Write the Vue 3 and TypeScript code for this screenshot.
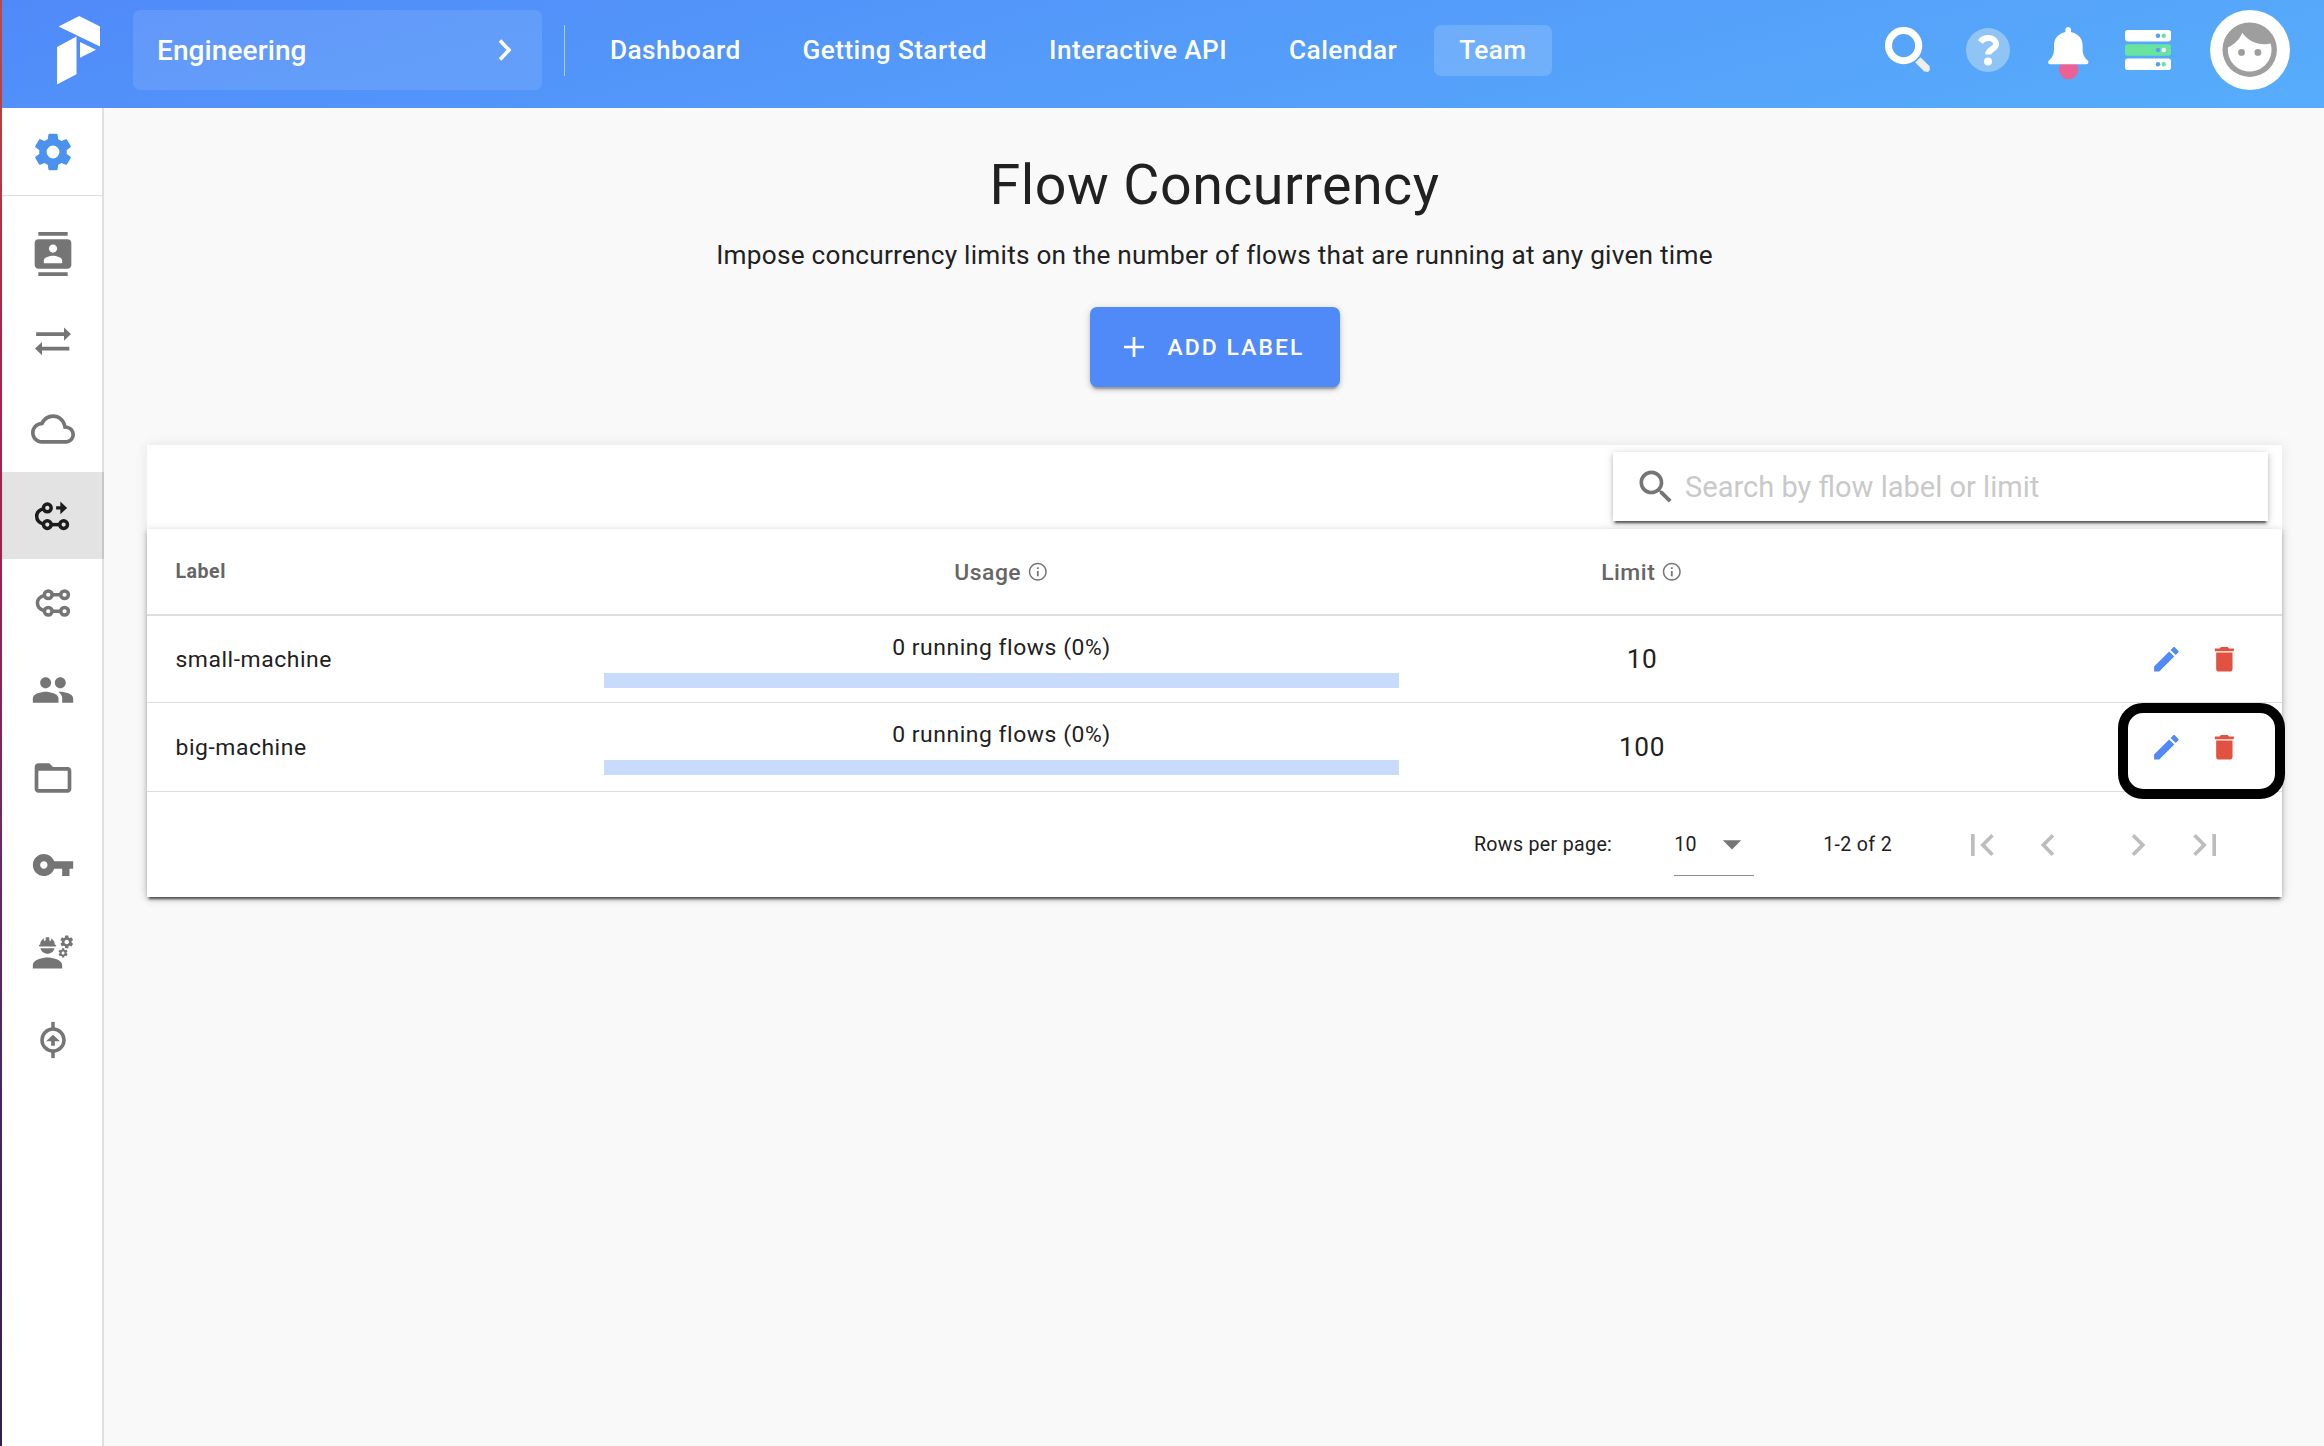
<script setup lang="ts">
interface NavLink { label: string; active?: boolean }
interface FlowLimit { label: string; running: number; limit: number; highlighted?: boolean }
interface SideItem { name: string; paths?: string[]; strokes?: string[]; rings?: [number, number][]; active?: boolean }

const links: NavLink[] = [
  { label: 'Dashboard' },
  { label: 'Getting Started' },
  { label: 'Interactive API' },
  { label: 'Calendar' },
  { label: 'Team', active: true }
]

const limits: FlowLimit[] = [
  { label: 'small-machine', running: 0, limit: 10 },
  { label: 'big-machine', running: 0, limit: 100, highlighted: true }
]

const percent = (row: FlowLimit) => Math.round((row.running / row.limit) * 100)

const cog = 'M12,15.5A3.5,3.5 0 0,1 8.5,12A3.5,3.5 0 0,1 12,8.5A3.5,3.5 0 0,1 15.5,12A3.5,3.5 0 0,1 12,15.5M19.43,12.97C19.47,12.65 19.5,12.33 19.5,12C19.5,11.67 19.47,11.34 19.43,11L21.54,9.37C21.73,9.22 21.78,8.95 21.66,8.73L19.66,5.27C19.54,5.05 19.27,4.96 19.05,5.05L16.56,6.05C16.04,5.66 15.5,5.32 14.87,5.07L14.5,2.42C14.46,2.18 14.25,2 14,2H10C9.75,2 9.54,2.18 9.5,2.42L9.13,5.07C8.5,5.32 7.96,5.66 7.44,6.05L4.95,5.05C4.73,4.96 4.46,5.05 4.34,5.27L2.34,8.73C2.21,8.95 2.27,9.22 2.46,9.37L4.57,11C4.53,11.34 4.5,11.67 4.5,12C4.5,12.33 4.53,12.65 4.57,12.97L2.46,14.63C2.27,14.78 2.21,15.05 2.34,15.27L4.34,18.73C4.46,18.95 4.73,19.03 4.95,18.95L7.44,17.94C7.96,18.34 8.5,18.68 9.13,18.93L9.5,21.58C9.54,21.82 9.75,22 10,22H14C14.25,22 14.46,21.82 14.5,21.58L14.87,18.93C15.5,18.67 16.04,18.34 16.56,17.94L19.05,18.95C19.27,19.03 19.54,18.95 19.66,18.73L21.66,15.27C21.78,15.05 21.73,14.78 21.54,14.63L19.43,12.97Z'

const sideItems: SideItem[] = [
  { name: 'account', paths: ['M20 0H4v2h16V0zM4 24h16v-2H4v2zM20 4H4c-1.1 0-2 .9-2 2v12c0 1.1.9 2 2 2h16c1.1 0 2-.9 2-2V6c0-1.1-.9-2-2-2zm-8 2.75c1.24 0 2.25 1.01 2.25 2.25s-1.01 2.25-2.25 2.25S9.75 10.24 9.75 9 10.76 6.75 12 6.75zM17 17H7v-1.5c0-1.67 3.33-2.5 5-2.5s5 .83 5 2.5V17z'] },
  { name: 'switch', paths: ['M2.8 7.2H18V4.6L21.8 8.2L18 11.8V9.3H2.8z', 'M20.9 15.1H6V12.5L2.2 16.1L6 19.8V17.2H20.9z'] },
  { name: 'cloud', paths: ['M19.35 10.04C18.67 6.59 15.64 4 12 4 9.11 4 6.6 5.64 5.35 8.04 2.34 8.36 0 10.91 0 14c0 3.31 2.69 6 6 6h13c2.76 0 5-2.24 5-5 0-2.64-2.05-4.78-4.65-4.96zM19 18H6c-2.21 0-4-1.79-4-4 0-2.05 1.53-3.76 3.56-3.97l1.07-.11.5-.95C8.08 7.14 9.94 6 12 6c2.62 0 4.88 1.86 5.39 4.43l.3 1.5 1.53.11c1.56.1 2.78 1.41 2.78 2.96 0 1.65-1.35 3-3 3z'] },
  { name: 'flow-concurrency', active: true, rings: [[8.9, 7.6], [8.9, 16.7], [17.8, 16.7]], strokes: ['M7 8C4.6 8.6 3.1 10.3 3.1 12.2S4.6 15.9 7 16.6', 'M11 16.7H15.8'], paths: ['M13.7 6.7H16V4.1L19.7 7.6L16 11.1V8.5H13.7z'] },
  { name: 'task-concurrency', rings: [[9.4, 7.5], [18.3, 7.5], [9.4, 16.5], [18.3, 16.5]], strokes: ['M7.4 7.9C5 8.4 3.5 10.1 3.5 12S5 15.6 7.4 16.2', 'M11.4 7.5H16.3', 'M11.4 16.5H16.3'] },
  { name: 'members', paths: ['M16 11c1.66 0 2.99-1.34 2.99-3S17.66 5 16 5c-1.66 0-3 1.34-3 3s1.34 3 3 3zm-8 0c1.66 0 2.99-1.34 2.99-3S9.66 5 8 5C6.34 5 5 6.34 5 8s1.34 3 3 3zm0 2c-2.33 0-7 1.17-7 3.5V19h14v-2.5c0-2.33-4.67-3.5-7-3.5zm8 0c-.29 0-.62.02-.97.05 1.16.84 1.97 1.97 1.97 3.45V19h6v-2.5c0-2.33-4.67-3.5-7-3.5z'] },
  { name: 'projects', paths: ['M20 6h-8l-2-2H4c-1.1 0-1.99.9-1.99 2L2 18c0 1.1.9 2 2 2h16c1.1 0 2-.9 2-2V8c0-1.1-.9-2-2-2zm0 12H4V8h16v10z'] },
  { name: 'secrets', paths: ['M12.65 10C11.83 7.67 9.61 6 7 6c-3.31 0-6 2.69-6 6s2.69 6 6 6c2.61 0 4.83-1.67 5.65-4H17v4h4v-4h2v-4H12.65zM7 14c-1.1 0-2-.9-2-2s.9-2 2-2 2 .9 2 2-.9 2-2 2z'] },
  { name: 'service-accounts', paths: ['M9 15c-2.67 0-8 1.34-8 4v2h16v-2c0-2.66-5.33-4-8-4zm13.1-8.16c.01-.11.02-.22.02-.34 0-.12-.01-.23-.03-.34l.74-.58c.07-.05.08-.15.04-.22l-.7-1.21c-.04-.08-.14-.1-.21-.08l-.86.35c-.18-.14-.38-.25-.59-.34l-.13-.93c-.02-.09-.09-.15-.18-.15h-1.4c-.09 0-.16.06-.17.15l-.13.93c-.21.09-.41.21-.59.34l-.87-.35c-.08-.03-.17 0-.21.08l-.7 1.21c-.04.08-.03.17.04.22l.74.58c-.02.11-.03.23-.03.34 0 .11.01.23.03.34l-.74.58c-.07.05-.08.15-.04.22l.7 1.21c.04.08.14.1.21.08l.87-.35c.18.14.38.25.59.34l.13.93c.01.09.08.15.17.15h1.4c.09 0 .16-.06.17-.15l.13-.93c.21-.09.41-.21.59-.34l.87.35c.08.03.17 0 .21-.08l.7-1.21c.04-.08.03-.17-.04-.22l-.73-.58zm-2.6.91c-.69 0-1.25-.56-1.25-1.25s.56-1.25 1.25-1.25 1.25.56 1.25 1.25-.56 1.25-1.25 1.25zm.42 3.93l-.5-.87c-.03-.06-.1-.08-.15-.06l-.62.25c-.13-.1-.27-.18-.42-.24l-.09-.66c-.02-.06-.08-.1-.14-.1h-1c-.06 0-.11.04-.12.11l-.09.66c-.15.06-.29.15-.42.24l-.62-.25c-.06-.02-.12 0-.15.06l-.5.87c-.03.06-.02.12.03.16l.53.41c-.01.08-.02.16-.02.24 0 .08.01.17.02.24l-.53.41c-.05.04-.06.11-.03.16l.5.87c.03.06.1.08.15.06l.62-.25c.13.1.27.18.42.24l.09.66c.01.07.06.11.12.11h1c.06 0 .12-.04.12-.11l.09-.66c.15-.06.29-.15.42-.24l.62.25c.06.02.12 0 .15-.06l.5-.87c.03-.06.02-.12-.03-.16l-.52-.41c.01-.08.02-.16.02-.24 0-.08-.01-.17-.02-.24l.53-.41c.05-.04.06-.11.04-.17zm-2.42 1.65c-.46 0-.83-.38-.83-.83 0-.46.38-.83.83-.83s.83.38.83.83c0 .46-.37.83-.83.83zM4.74 9h8.53c.27 0 .49-.22.49-.49v-.02c0-.27-.22-.49-.49-.49H13c0-1.48-.81-2.75-2-3.45V5.5c0 .28-.22.5-.5.5S10 5.78 10 5.5V4.14C9.68 4.06 9.35 4 9 4s-.68.06-1 .14V5.5c0 .28-.22.5-.5.5S7 5.78 7 5.5v-.95C5.81 5.25 5 6.52 5 8h-.26c-.27 0-.49.22-.49.49v.03c0 .26.22.48.49.48zM9 13c1.86 0 3.41-1.28 3.86-3H5.14c.45 1.72 2 3 3.86 3z'] },
  { name: 'cloud-hooks', strokes: ['M12 2.1V6', 'M12 18V21.9', 'M12 6A6 6 0 0 1 12 18A6 6 0 0 1 12 6z'], paths: ['M12 9.2L15.8 12.7H13V15.1H11V12.7H8.2z'] }
]

const infoPath = 'M11 7h2v2h-2zm0 4h2v6h-2zm1-9C6.48 2 2 6.48 2 12s4.48 10 10 10 10-4.48 10-10S17.52 2 12 2zm0 18.3c-4.58 0-8.3-3.72-8.3-8.3S7.42 3.7 12 3.7s8.3 3.72 8.3 8.3-3.72 8.3-8.3 8.3z'

const pageButtons = [
  { name: 'first', path: 'M18.41 16.59L13.82 12l4.59-4.59L17 6l-6 6 6 6zM6 6h2v12H6z' },
  { name: 'previous', path: 'M15.41 7.41L14 6l-6 6 6 6 1.41-1.41L10.83 12z' },
  { name: 'next', path: 'M8.59 16.59L13.17 12 8.59 7.41 10 6l6 6-6 6z' },
  { name: 'last', path: 'M5.59 7.41L10.18 12l-4.59 4.59L7 18l6-6-6-6zM16 6h2v12h-2z' }
]
</script>

<template>
  <div class="app">
    <header class="topbar">
      <svg class="logo" viewBox="0 0 43 68.5">
        <path d="M22.2 0L43 10.6V30.6L1.6 10.6zM0 31L19.5 20.5V58.3L0 68.5zM23 26L39 33.7L23 41.8z" />
      </svg>
      <div class="team-picker">
        <span>Engineering</span>
        <svg width="14" height="22" viewBox="0 0 14 22"><path d="M2 1.5L11 11L2 20.5" fill="none" stroke="#fff" stroke-width="3.6" /></svg>
      </div>
      <div class="divider"></div>
      <nav class="links">
        <a v-for="l in links" :key="l.label" class="link" :class="{ active: l.active }">{{ l.label }}</a>
      </nav>
      <div class="tools">
        <svg class="tool-search" viewBox="0 0 46 46">
          <path d="M32.8 32.8L42.5 42.3" stroke="#eee" stroke-width="7.4" stroke-linecap="butt" />
          <path d="M38 38L42.3 42.2" stroke="#eee" stroke-width="5.2" stroke-linecap="round" />
          <circle cx="18.6" cy="18.6" r="15.1" fill="none" stroke="#fff" stroke-width="7.1" />
        </svg>
        <svg class="tool-help" viewBox="0 0 44 44">
          <circle cx="22" cy="22" r="22" fill="#8fc4f5" />
          <path d="M14.3 13.9C16.2 11.3 18.9 10.1 22.3 10.1C26.6 10.1 30 12.6 30 16.2C30 21.4 22.1 20.9 22.1 26.6" fill="none" stroke="#fff" stroke-width="6" />
          <circle cx="22" cy="33.4" r="4" fill="#fff" />
        </svg>
        <svg class="tool-bell" viewBox="0 0 41 53">
          <circle cx="20.6" cy="42.6" r="9.7" fill="#eb6196" />
          <path d="M20.2 0C21.8 0 23 1.2 23 2.8V4.9C29.7 6.2 34.6 11.2 34.6 18V22.5C34.6 27.4 36.5 31.3 39.7 33.6C41 34.8 40.5 37.3 38.4 37.3H2.2C.1 37.3-.5 34.8 .9 33.6C4.1 31.3 6 27.4 6 22.5V18C6 11.2 10.8 6.2 17.4 4.9V2.8C17.4 1.2 18.6 0 20.2 0z" fill="#fff" />
        </svg>
        <svg class="tool-server" viewBox="0 0 46 40">
          <rect width="46" height="11.4" rx="2.8" fill="#fff" />
          <rect y="14.3" width="46" height="11.4" rx="2.8" fill="#69e3a0" />
          <rect y="28.6" width="46" height="11.4" rx="2.8" fill="#fff" />
          <circle cx="33" cy="5.7" r="2.2" fill="#53a1f2" /><circle cx="38.7" cy="5.7" r="2.2" fill="#69e3a0" />
          <circle cx="33" cy="20" r="2.2" fill="#53a1f2" /><circle cx="38.7" cy="20" r="2.2" fill="#fff" />
          <circle cx="33" cy="34.3" r="2.2" fill="#53a1f2" /><circle cx="38.7" cy="34.3" r="2.2" fill="#69e3a0" />
        </svg>
        <div class="avatar">
          <svg width="65.4" height="65.4" viewBox="0 0 24 24"><path fill="#9e9e9e" d="M9,11.75A1.25,1.25 0 0,0 7.75,13A1.25,1.25 0 0,0 9,14.25A1.25,1.25 0 0,0 10.25,13A1.25,1.25 0 0,0 9,11.75M15,11.75A1.25,1.25 0 0,0 13.75,13A1.25,1.25 0 0,0 15,14.25A1.25,1.25 0 0,0 16.25,13A1.25,1.25 0 0,0 15,11.75M12,2A10,10 0 0,0 2,12A10,10 0 0,0 12,22A10,10 0 0,0 22,12A10,10 0 0,0 12,2M12,20C7.59,20 4,16.41 4,12C4,11.71 4,11.42 4.05,11.14C6.41,10.09 8.28,8.16 9.26,5.77C11.07,8.33 14.05,10 17.42,10C18.2,10 18.95,9.91 19.67,9.74C19.88,10.45 20,11.21 20,12C20,16.41 16.41,20 12,20Z" /></svg>
        </div>
      </div>
    </header>

    <div class="body">
      <aside class="sidebar">
        <div class="side-head"><svg class="side-icon" viewBox="0 0 24 24"><path :d="cog" /></svg></div>
        <div v-for="item in sideItems" :key="item.name" class="side-item" :class="{ active: item.active }">
          <svg class="side-icon" viewBox="0 0 24 24">
            <path v-for="p in item.paths" :key="p" :d="p" />
            <path v-for="s in item.strokes" :key="s" :d="s" class="stroke" />
            <circle v-for="r in item.rings" :key="r.join()" :cx="r[0]" :cy="r[1]" r="2.1" class="stroke" />
          </svg>
        </div>
      </aside>

      <main class="main">
        <h1>Flow Concurrency</h1>
        <p class="subtitle">Impose concurrency limits on the number of flows that are running at any given time</p>
        <button class="add">
          <svg width="20" height="20" viewBox="0 0 20 20"><path d="M10 0V20M0 10H20" stroke="#fff" stroke-width="2.7" /></svg>
          <span>ADD LABEL</span>
        </button>

        <section class="card">
          <div class="card-top">
            <div class="search">
              <svg width="44" height="44" viewBox="0 0 24 24"><path fill="#757575" d="M15.5 14h-.79l-.28-.27C15.41 12.59 16 11.11 16 9.5 16 5.91 13.09 3 9.5 3S3 5.91 3 9.5 5.91 16 9.5 16c1.61 0 3.09-.59 4.23-1.57l.27.28v.79l5 4.99L20.49 19l-4.99-5zm-6 0C7.01 14 5 11.99 5 9.5S7.01 5 9.5 5 14 7.01 14 9.5 11.99 14 9.5 14z" /></svg>
              <span>Search by flow label or limit</span>
            </div>
          </div>
          <div class="table">
            <div class="row head">
              <div class="c-label">Label</div>
              <div class="c-center"><span>Usage</span><svg class="info" viewBox="0 0 24 24"><path :d="infoPath" /></svg></div>
              <div class="c-center"><span>Limit</span><svg class="info" viewBox="0 0 24 24"><path :d="infoPath" /></svg></div>
              <div></div>
            </div>
            <div v-for="row in limits" :key="row.label" class="row">
              <div class="c-label">{{ row.label }}</div>
              <div class="c-usage">
                <span>{{ row.running }} running flows ({{ percent(row) }}%)</span>
                <div class="bar"><div class="fill" :style="{ width: percent(row) + '%' }"></div></div>
              </div>
              <div class="c-limit">{{ row.limit }}</div>
              <div class="c-actions">
                <svg class="act edit" viewBox="0 0 24 24"><path d="M20.71,7.04C21.1,6.65 21.1,6 20.71,5.63L18.37,3.29C18,2.9 17.35,2.9 16.96,3.29L15.12,5.12L18.87,8.87M3,17.25V21H6.75L17.81,9.93L14.06,6.18L3,17.25Z" /></svg>
                <svg class="act trash" viewBox="0 0 24 24"><path d="M6 19c0 1.1.9 2 2 2h8c1.1 0 2-.9 2-2V7H6v12zM19 4h-3.5l-1-1h-5l-1 1H5v2h14V4z" /></svg>
              </div>
              <div v-if="row.highlighted" class="highlight"></div>
            </div>
            <div class="footer">
              <span class="per-page">Rows per page:</span>
              <div class="select"><span>10</span><svg width="44" height="44" viewBox="0 0 24 24"><path fill="#757575" d="M7 10l5 5 5-5z" /></svg></div>
              <span class="range">1-2 of 2</span>
              <svg v-for="b in pageButtons" :key="b.name" class="pager" :class="b.name" viewBox="0 0 24 24"><path :d="b.path" /></svg>
            </div>
          </div>
        </section>
      </main>
    </div>
  </div>
</template>

<style>
body { margin: 0; background: #f9f9f9; }
</style>

<style scoped>
.app {
  box-sizing: border-box;
  width: 2324px;
  height: 1446px;
  padding-left: 2px;
  display: flex;
  flex-direction: column;
  overflow: hidden;
  font-family: Roboto, sans-serif;
  color: #212121;
  background: linear-gradient(180deg, #bd4a48 0, #b84040 110px, #ae2448 330px, #a02050 560px, #6c2a66 830px, #4a2560 1080px, #32204c 1446px) 0 0 / 2px 100% no-repeat, #f9f9f9;
}
svg { display: block; flex: none; }

.topbar {
  flex: none;
  height: 108px;
  box-sizing: border-box;
  padding: 0 34px 8px 55px;
  display: flex;
  align-items: center;
  background: linear-gradient(165deg, #508af9 0%, #57adfb 100%);
  color: #fff;
}
.logo { width: 43px; height: 68.5px; fill: #fff; }
.team-picker {
  box-sizing: border-box;
  width: 409px;
  height: 80px;
  margin-left: 33px;
  padding: 0 30px 0 24px;
  border-radius: 7px;
  background: rgba(255, 255, 255, 0.1);
  display: flex;
  align-items: center;
  justify-content: space-between;
  font-size: 28px;
  font-weight: 500;
  letter-spacing: 0.1px;
}
.divider { width: 1px; height: 51px; margin-left: 22px; background: rgba(255, 255, 255, 0.5); }
.links { display: flex; gap: 12px; margin-left: 20px; }
.link {
  height: 51px;
  line-height: 51px;
  padding: 0 25px;
  border-radius: 7px;
  font-size: 26.2px;
  font-weight: 500;
  letter-spacing: 0.43px;
}
.link.active { background: rgba(255, 255, 255, 0.16); }
.tools { margin-left: auto; display: flex; align-items: center; }
.tool-search { width: 46px; height: 46px; }
.tool-help { width: 44px; height: 44px; margin-left: 35px; }
.tool-bell { width: 41px; height: 53px; margin: 6px 0 0 37.5px; }
.tool-server { width: 46px; height: 40px; margin-left: 36.5px; }
.avatar {
  width: 80px;
  height: 80px;
  margin-left: 39px;
  border-radius: 50%;
  background: #fff;
  display: flex;
  align-items: center;
  justify-content: center;
}

.body { flex: 1; display: flex; min-height: 0; }
.sidebar { width: 102px; box-sizing: border-box; flex: none; background: #fff; box-shadow: inset -2px 0 #e0e0e0; }
.side-head {
  height: 88px;
  box-sizing: border-box;
  border-bottom: 1px solid #dcdcdc;
  margin-bottom: 14.3px;
  display: flex;
  align-items: center;
  justify-content: center;
}
.side-head .side-icon { fill: #4a92ee; }
.side-item { height: 87.3px; display: flex; align-items: center; justify-content: center; }
.side-item.active { background: rgba(0, 0, 0, 0.11); }
.side-icon { width: 44px; height: 44px; fill: #757575; overflow: visible; }
.stroke { fill: none; stroke: #757575; stroke-width: 1.9; }
.active .side-icon { fill: #1c1c1c; }
.active .stroke { stroke: #1c1c1c; }

.main { flex: 1; display: flex; flex-direction: column; align-items: center; padding: 0 42px 0 43px; }
h1 { margin: 42px 0 0; font-size: 55.6px; line-height: 70px; font-weight: 400; letter-spacing: 0.45px; }
.subtitle { margin: 17px 0 0; font-size: 26.2px; line-height: 36px; letter-spacing: 0.24px; }
.add {
  box-sizing: border-box;
  width: 250px;
  height: 80px;
  margin-top: 34px;
  padding: 0 34px;
  border: 0;
  border-radius: 7px;
  background: #508af8;
  color: #fff;
  display: flex;
  align-items: center;
  font: 500 22.9px Roboto, sans-serif;
  letter-spacing: 2.08px;
  box-shadow: 0 4px 2px -2px rgba(0, 0, 0, 0.24), 0 3px 4px rgba(0, 0, 0, 0.16), 0 1px 8px rgba(0, 0, 0, 0.12);
}
.add span { margin-left: 24px; white-space: nowrap; }

.card { width: 2135px; margin-top: 58px; background: #fff; box-shadow: 0 0 12px rgba(0, 0, 0, 0.09); }
.card-top { height: 84px; display: flex; justify-content: flex-end; box-sizing: border-box; padding: 7px 14px 0 0; overflow: hidden; }
.search {
  box-sizing: border-box;
  width: 655px;
  height: 69px;
  padding-left: 21px;
  background: #fff;
  display: flex;
  align-items: center;
  font-size: 29.05px;
  color: #c9c9c9;
  box-shadow: 0 4px 2px -2px rgba(0, 0, 0, 0.55), 0 3px 4px rgba(0, 0, 0, 0.16), 0 1px 8px rgba(0, 0, 0, 0.18);
}
.search span { margin-left: 7px; }
.table { background: #fff; box-shadow: 0 4px 2px -2px rgba(0, 0, 0, 0.55), 0 3px 4px rgba(0, 0, 0, 0.16), 0 1px 8px rgba(0, 0, 0, 0.18); }
.row {
  position: relative;
  box-sizing: border-box;
  display: grid;
  grid-template-columns: 431px 847px 434px 1fr;
  height: 87px;
  border-bottom: 1px solid #dedede;
  font-size: 22.9px;
  letter-spacing: 0.55px;
}
.row:nth-child(3) { height: 89px; }
.row.head { border-bottom: 2px solid #dedede; color: #666; font-weight: 500; letter-spacing: 0.5px; }
.row > div { align-self: center; }
.c-label { padding-left: 28.5px; }
.head .c-label { font-size: 19.6px; font-weight: 700; }
.c-center { display: flex; align-items: center; justify-content: center; gap: 6px; padding-top: 1px; }
.info { width: 21.6px; height: 21.6px; fill: #757575; }
.row > .c-usage { align-self: start; padding: 17px 26px 0; display: flex; flex-direction: column; align-items: center; }
.c-usage span { line-height: 30px; }
.bar { width: 100%; height: 15px; margin-top: 10px; background: #c8dbfb; }
.fill { height: 100%; background: #508af8; }
.c-limit { text-align: center; font-size: 26.2px; }
.c-actions { display: flex; justify-content: flex-end; gap: 25.3px; padding-right: 41.6px; }
.act { width: 32.7px; height: 32.7px; }
.edit { fill: #508af8; }
.trash { fill: #e15241; }
.row > .highlight {
  position: absolute;
  right: -3px;
  top: 0;
  box-sizing: border-box;
  width: 167px;
  height: 96px;
  border: 10px solid #000;
  border-radius: 25px;
}
.footer { height: 105px; display: flex; align-items: center; justify-content: flex-end; padding-right: 55px; font-size: 19.6px; letter-spacing: 0.33px; }
.select { position: relative; width: 80px; height: 61px; margin-left: 62px; display: flex; align-items: center; justify-content: space-between; border-bottom: 1px solid #8c8c8c; }
.select svg { margin-right: 0; }
.range { margin: 0 68px 0 69px; }
.pager { width: 44px; height: 44px; fill: #bdbdbd; }
.previous { margin-left: 22px; }
.next { margin-left: 46px; }
.last { margin-left: 23px; }
</style>
